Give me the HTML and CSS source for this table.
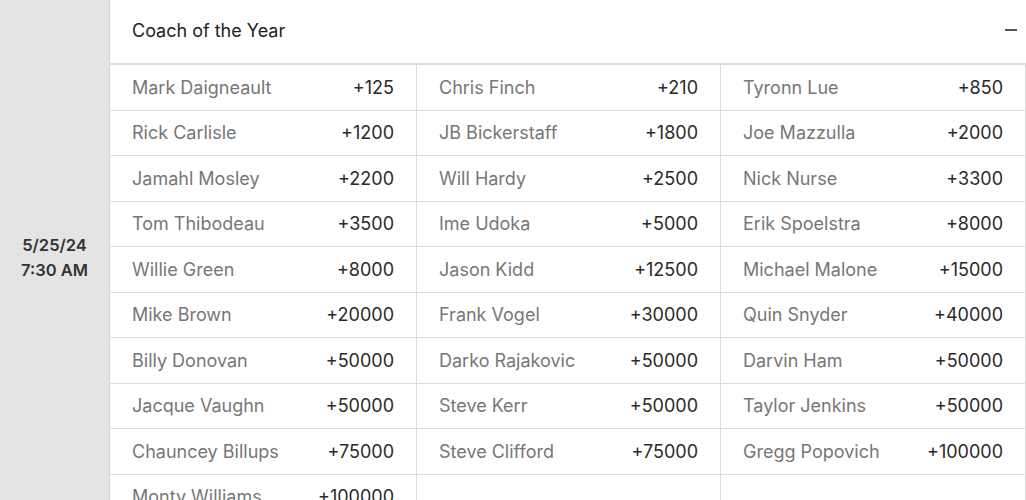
FILE: index.html
```html
<!DOCTYPE html>
<html>
<head>
<meta charset="utf-8">
<link rel="stylesheet" href="styles.css">
</head>
<body>
<div class="event">
  <div class="date"><div>5/25/24</div><div>7:30 AM</div></div>
  <div class="panel">
    <div class="header"><span class="title">Coach of the Year</span><span class="toggle"></span></div>
    <div class="grid">
      <div class="cell"><span class="name">Mark Daigneault</span><span class="odds">+125</span></div>
      <div class="cell"><span class="name">Chris Finch</span><span class="odds">+210</span></div>
      <div class="cell"><span class="name">Tyronn Lue</span><span class="odds">+850</span></div>
      <div class="cell"><span class="name">Rick Carlisle</span><span class="odds">+1200</span></div>
      <div class="cell"><span class="name">JB Bickerstaff</span><span class="odds">+1800</span></div>
      <div class="cell"><span class="name">Joe Mazzulla</span><span class="odds">+2000</span></div>
      <div class="cell"><span class="name">Jamahl Mosley</span><span class="odds">+2200</span></div>
      <div class="cell"><span class="name">Will Hardy</span><span class="odds">+2500</span></div>
      <div class="cell"><span class="name">Nick Nurse</span><span class="odds">+3300</span></div>
      <div class="cell"><span class="name">Tom Thibodeau</span><span class="odds">+3500</span></div>
      <div class="cell"><span class="name">Ime Udoka</span><span class="odds">+5000</span></div>
      <div class="cell"><span class="name">Erik Spoelstra</span><span class="odds">+8000</span></div>
      <div class="cell"><span class="name">Willie Green</span><span class="odds">+8000</span></div>
      <div class="cell"><span class="name">Jason Kidd</span><span class="odds">+12500</span></div>
      <div class="cell"><span class="name">Michael Malone</span><span class="odds">+15000</span></div>
      <div class="cell"><span class="name">Mike Brown</span><span class="odds">+20000</span></div>
      <div class="cell"><span class="name">Frank Vogel</span><span class="odds">+30000</span></div>
      <div class="cell"><span class="name">Quin Snyder</span><span class="odds">+40000</span></div>
      <div class="cell"><span class="name">Billy Donovan</span><span class="odds">+50000</span></div>
      <div class="cell"><span class="name">Darko Rajakovic</span><span class="odds">+50000</span></div>
      <div class="cell"><span class="name">Darvin Ham</span><span class="odds">+50000</span></div>
      <div class="cell"><span class="name">Jacque Vaughn</span><span class="odds">+50000</span></div>
      <div class="cell"><span class="name">Steve Kerr</span><span class="odds">+50000</span></div>
      <div class="cell"><span class="name">Taylor Jenkins</span><span class="odds">+50000</span></div>
      <div class="cell"><span class="name">Chauncey Billups</span><span class="odds">+75000</span></div>
      <div class="cell"><span class="name">Steve Clifford</span><span class="odds">+75000</span></div>
      <div class="cell"><span class="name">Gregg Popovich</span><span class="odds">+100000</span></div>
      <div class="cell"><span class="name">Monty Williams</span><span class="odds">+100000</span></div>
      <div class="cell"></div>
      <div class="cell"></div>
    </div>
  </div>
</div>
</body>
</html>
```
FILE: styles.css
```css
html, body {
  margin: 0;
  padding: 0;
  background: #ffffff;
  overflow: hidden;
}
body {
  font-family: Inter, "Noto Sans", sans-serif;
}
.event {
  display: flex;
  width: 1026px;
}
.date {
  width: 110px;
  flex: none;
  background: #e4e4e4;
  border-right: 1px solid #d6d6d6;
  display: flex;
  flex-direction: column;
  align-items: center;
  justify-content: center;
  font-size: 16.5px;
  font-weight: 600;
  color: #333333;
  line-height: 25px;
  padding-bottom: 4px;
  box-sizing: border-box;
}
.panel {
  flex: 1;
  background: #ffffff;
}
.header {
  border-bottom: 2px solid #dcdcdc;
  display: flex;
  align-items: center;
  justify-content: space-between;
  padding: 0 9px 0 22px;
  box-sizing: border-box;
  height: 65px;
}
.title {
  font-size: 18px;
  color: #222222;
  margin-top: -3px;
}
.toggle {
  width: 12px;
  height: 1.5px;
  background: #555555;
  margin-top: -3px;
}
.grid {
  display: grid;
  grid-template-columns: 307px 304px 305px;
}
.cell {
  height: 45.5px;
  box-sizing: border-box;
  border-bottom: 1.5px solid #dcdcdc;
  border-right: 1.5px solid #dcdcdc;
  display: flex;
  align-items: center;
  justify-content: space-between;
  padding: 0 22px;
  font-size: 18px;
}
.name {
  color: #777777;
}
.odds {
  color: #2a2a2a;
}
```
